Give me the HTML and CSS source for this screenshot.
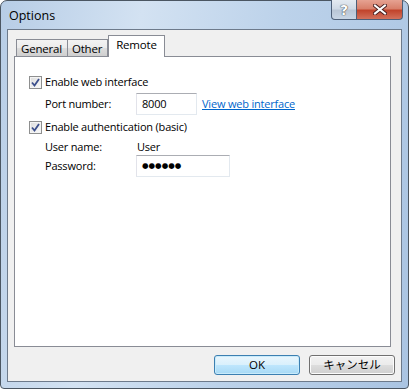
FILE: index.html
```html
<!DOCTYPE html>
<html lang="en">
<head>
	<meta charset="UTF-8">
	<title>Options</title>
	<link rel="stylesheet" href="styles.css">
</head>
<body>
	<div class="window">
		<div class="titlebar">
			<span class="title">Options</span>
			<div class="caption-btns">
				<button class="cap-help">?</button>
				<button class="cap-close">
					<svg width="14" height="11" viewBox="0 0 14 11">
						<path d="M2 1.5 L12 9.5 M12 1.5 L2 9.5" stroke="#4a2020" stroke-width="4" stroke-linecap="square"/>
						<path d="M2 1.5 L12 9.5 M12 1.5 L2 9.5" stroke="#ffffff" stroke-width="2" stroke-linecap="square"/>
					</svg>
				</button>
			</div>
		</div>
		<div class="client">
			<div class="tabs">
				<div class="tab">General</div>
				<div class="tab">Other</div>
				<div class="tab active">Remote</div>
			</div>
			<div class="panel">
				<label class="check-row">
					<span class="checkbox">
						<svg width="9" height="9" viewBox="0 0 9 9"><path d="M1 4.5 L3.5 7.5 L8 1" fill="none" stroke="#3c4f8c" stroke-width="1.8"/></svg>
					</span>
					Enable web interface
				</label>
				<div class="field-row port-row">
					<span class="field-label">Port number:</span>
					<div class="textbox port">8000</div>
					<a href="#" class="link">View web interface</a>
				</div>
				<label class="check-row second">
					<span class="checkbox">
						<svg width="9" height="9" viewBox="0 0 9 9"><path d="M1 4.5 L3.5 7.5 L8 1" fill="none" stroke="#3c4f8c" stroke-width="1.8"/></svg>
					</span>
					Enable authentication (basic)
				</label>
				<div class="field-row user-row">
					<span class="field-label">User name:</span>
					<span class="value">User</span>
				</div>
				<div class="field-row pass-row">
					<span class="field-label">Password:</span>
					<div class="textbox pass">&#9679;&#9679;&#9679;&#9679;&#9679;&#9679;</div>
				</div>
			</div>
			<div class="buttons">
				<button class="btn default">OK</button>
				<button class="btn">キャンセル</button>
			</div>
		</div>
	</div>
</body>
</html>
```

FILE: styles.css
```css
html, body {
	margin: 0;
	padding: 0;
	background: #ffffff;
}
body {
	font-family: "Open Sans", "Noto Sans CJK JP", sans-serif;
	font-size: 11px;
	letter-spacing: -0.2px;
	line-height: 16px;
	color: #000;
}
.window {
	box-sizing: border-box;
	width: 409px;
	height: 389px;
	border: 1px solid #4b5662;
	border-radius: 7px 7px 4px 4px;
	background: linear-gradient(100deg, #b7cde6 0%, #d3e2f2 30%, #bcd2ea 60%, #aac4e2 100%);
	padding: 0 6px 6px 6px;
	display: flex;
	flex-direction: column;
}
.titlebar {
	height: 28px;
	display: flex;
	align-items: flex-start;
}
.title {
	margin: 7px 0 0 2px;
	font-size: 12.5px;
	letter-spacing: 0;
}
.caption-btns {
	margin-left: auto;
	display: flex;
	margin-right: -1px;
	margin-top: -1px;
}
.caption-btns button {
	height: 20px;
	border: 1px solid #4d5f78;
	border-top: none;
	padding: 0;
	margin: 0;
	display: flex;
	align-items: center;
	justify-content: center;
}
.cap-help {
	width: 26px;
	border-radius: 0 0 0 4px;
	background: linear-gradient(#e4eaf1 0%, #d0dae6 45%, #b9c6d6 55%, #c8d6e6 100%);
	color: #fff;
	font: bold 14px "DejaVu Sans", sans-serif;
	text-shadow: 0 0 1px #333, 0 0 1px #333;
}
.cap-close {
	width: 46px;
	border-left: none !important;
	border-radius: 0 0 4px 0;
	background: linear-gradient(#e6a292 0%, #d8806b 45%, #c1442c 55%, #d2715c 100%);
}
.client {
	flex: 1;
	border: 1px solid #6d7a8b;
	background: #f0f0f0;
	padding: 6px 0 0 6px;
	display: flex;
	flex-direction: column;
}
.tabs {
	display: flex;
	align-items: flex-end;
	height: 20px;
	padding-left: 2px;
	position: relative;
	z-index: 1;
}
.tab {
	height: 16px;
	border: 1px solid #898c95;
	border-bottom: none;
	margin-right: -1px;
	padding: 0 5px 0 4px;
	line-height: 18px;
	font-size: 11.5px;
	background: linear-gradient(#f3f3f3 0%, #ebebeb 50%, #dddddd 51%, #cfcfcf 100%);
}
.tab.active {
	height: 21px;
	margin-bottom: -1px;
	background: #ffffff;
	padding: 0 7px;
	line-height: 18px;
	margin-left: 1px;
}
.panel {
	box-sizing: border-box;
	width: 377px;
	height: 291px;
	border: 1px solid #898c95;
	background: #ffffff;
	padding: 17px 0 0 14px;
}
.check-row {
	display: flex;
	align-items: center;
	height: 16px;
}
.check-row.second {
	margin-top: 4px;
}
.checkbox {
	box-sizing: border-box;
	width: 13px;
	height: 13px;
	border: 1px solid #8e8f8f;
	background: linear-gradient(135deg, #dcdcdc, #fbfbfb);
	margin-right: 3px;
	display: flex;
	align-items: center;
	justify-content: center;
	box-shadow: inset 0 0 0 1px #f4f4f4;
}
.field-row {
	display: flex;
	align-items: center;
	padding-left: 16px;
}
.field-label {
	width: 91px;
}
.port-row {
	height: 22px;
	margin-top: 3px;
}
.user-row {
	height: 16px;
	margin-top: 4px;
}
.value {
	padding-left: 1px;
}
.pass-row {
	height: 22px;
}
.textbox {
	box-sizing: border-box;
	height: 22px;
	border: 1px solid #abadb3;
	border-color: #abadb3 #e3e9ef #e3e9ef #e2e3ea;
	padding: 0 5px;
	line-height: 19px;
	background: #fff;
}
.port {
	width: 61px;
}
.pass {
	width: 94px;
	font: 7.5px "DejaVu Sans", sans-serif;
	line-height: 20px;
	letter-spacing: 0;
}
.link {
	margin-left: 5px;
	color: #0066cc;
	text-decoration: underline;
}
.buttons {
	display: flex;
	justify-content: flex-end;
	gap: 9px;
	margin-top: 8px;
	padding-right: 6px;
}
.btn {
	width: 86px;
	height: 20px;
	border: 1px solid #707070;
	border-radius: 3px;
	background: linear-gradient(#f2f2f2 0%, #ebebeb 50%, #dddddd 51%, #cfcfcf 100%);
	font-family: "Open Sans", "Noto Sans CJK JP", sans-serif;
	font-size: 11.5px;
	padding: 0;
	line-height: 16px;
	box-shadow: inset 0 0 0 1px #fcfcfc;
}
.btn.default {
	border-color: #3c7fb1;
	background: linear-gradient(#eaf6fd 0%, #d9f0fc 50%, #bee6fd 51%, #a7d9f5 100%);
	box-shadow: inset 0 0 0 1px #c8ebfb;
}
```
